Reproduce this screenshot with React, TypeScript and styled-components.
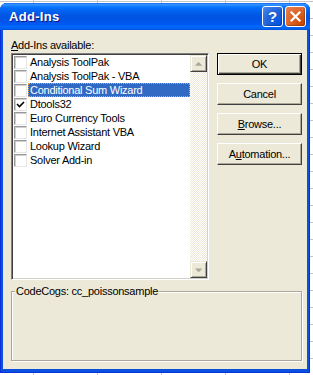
import React from 'react';
import styled, { createGlobalStyle } from 'styled-components';

const GlobalStyle = createGlobalStyle`
  html, body {
    margin: 0;
    padding: 0;
  }
  body {
    width: 313px;
    height: 375px;
    overflow: hidden;
    background-color: #fff;
    background-image:
      linear-gradient(#c4c4c4 1px, transparent 1px),
      linear-gradient(90deg, #c4c4c4 1px, transparent 1px);
    background-size: 64px 17px;
    background-position: 33px 1px;
    font-family: "Liberation Sans", Arial, sans-serif;
    font-size: 11px;
    letter-spacing: -0.25px;
  }
`;

const Window = styled.div`
  margin-top: 3px;
  width: 310px;
  height: 370px;
  display: flex;
  flex-direction: column;
  background: #0a52dd;
  border-radius: 7px 7px 0 0;
  box-shadow: inset 0 0 0 1px #0831d9;
  overflow: hidden;
`;

const TitleBar = styled.div`
  height: 27px;
  flex-shrink: 0;
  display: flex;
  align-items: center;
  padding: 0 4px 0 9px;
  background: linear-gradient(
    180deg,
    #0058ee 0%,
    #3a93ff 4%,
    #288eff 8%,
    #127dff 12%,
    #036ffc 18%,
    #0262ee 30%,
    #0057e5 44%,
    #0054e3 56%,
    #0055eb 70%,
    #005bf5 80%,
    #026afe 88%,
    #0062ef 94%,
    #0052d6 100%
  );
`;

const Title = styled.span`
  flex: 1;
  color: #fff;
  font-weight: bold;
  font-size: 13px;
  letter-spacing: 0.3px;
  text-shadow: 1px 1px #0f1089;
  margin-top: -1px;
`;

const TitleButton = styled.div<{ $kind: 'help' | 'close' }>`
  width: 19px;
  height: 19px;
  margin-left: 2px;
  border: 1px solid #fff;
  border-radius: 3px;
  display: flex;
  align-items: center;
  justify-content: center;
  color: #fff;
  font-weight: bold;
  font-size: 15px;
  letter-spacing: 0;
  background: ${(p) =>
    p.$kind === 'close'
      ? 'radial-gradient(circle at 90% 90%, #cc4600 0%, #dc6527 55%, #e8815a 100%)'
      : 'radial-gradient(circle at 90% 90%, #0054e9 0%, #2263d5 55%, #4b8bf4 100%)'};
  box-shadow: inset -1px -1px 1px rgba(0, 0, 0, 0.25);
`;

const Body = styled.div`
  flex: 1;
  margin: 0 3px 4px 3px;
  background: #ece9d8;
  padding: 9px 5px 0 8px;
  display: flex;
  flex-direction: column;
  color: #000;
`;

const TopRow = styled.div`
  display: flex;
  gap: 8px;
`;

const LeftCol = styled.div`
  display: flex;
  flex-direction: column;
`;

const Label = styled.div`
  height: 13px;
  line-height: 13px;
  margin-bottom: 1px;
`;

const Key = styled.span`
  text-decoration: underline;
  text-underline-offset: 1px;
`;

const ListBox = styled.div`
  width: 198px;
  height: 227px;
  box-sizing: border-box;
  border: 1px solid;
  border-color: #808080 #fff #fff #808080;
  box-shadow: inset 1px 1px 0 #404040, inset -1px -1px 0 #d4d0c8;
  padding: 1px;
  background: #fff;
  display: flex;
`;

const Items = styled.div`
  flex: 1;
  display: flex;
  flex-direction: column;
`;

const Row = styled.div`
  height: 14px;
  display: flex;
  align-items: center;
`;

const Check = styled.div`
  width: 13px;
  height: 13px;
  box-sizing: border-box;
  margin: 0 1px 0 1px;
  border: 1px solid;
  border-color: #999 #e6e6e6 #e6e6e6 #999;
  box-shadow: inset 1px 1px 0 #cfcfcf;
  display: flex;
  align-items: center;
  justify-content: center;
`;

const ItemText = styled.div<{ $selected?: boolean }>`
  flex: 1;
  height: 14px;
  line-height: 14px;
  padding-left: 2px;
  box-sizing: border-box;
  white-space: nowrap;
  background: ${(p) => (p.$selected ? '#316ac5' : 'transparent')};
  color: ${(p) => (p.$selected ? '#fff' : '#000')};
  outline: ${(p) => (p.$selected ? '1px dotted #f0a43c' : 'none')};
  outline-offset: -1px;
`;

const ScrollBar = styled.div`
  width: 17px;
  display: flex;
  flex-direction: column;
`;

const ScrollButton = styled.div`
  width: 17px;
  height: 17px;
  box-sizing: border-box;
  background: #ece9d8;
  border: 1px solid;
  border-color: #ece9d8 #404040 #404040 #ece9d8;
  box-shadow: inset 1px 1px 0 #fff, inset -1px -1px 0 #aca899;
  display: flex;
  align-items: center;
  justify-content: center;
`;

const Track = styled.div`
  flex: 1;
  background-color: #fff;
  background-image: conic-gradient(#ece9d8 25%, #fff 0 50%, #ece9d8 0 75%, #fff 0);
  background-size: 2px 2px;
`;

const RightCol = styled.div`
  padding-top: 14px;
  display: flex;
  flex-direction: column;
  gap: 8px;
`;

const Button = styled.div<{ $default?: boolean }>`
  width: 85px;
  height: 22px;
  box-sizing: border-box;
  background: #ece9d8;
  border: 1px solid;
  border-color: ${(p) => (p.$default ? '#000' : '#fff #404040 #404040 #fff')};
  box-shadow: ${(p) =>
    p.$default
      ? 'inset 1px 1px 0 #fff, inset -1px -1px 0 #404040, inset -2px -2px 0 #aca899'
      : 'inset -1px -1px 0 #aca899'};
  display: flex;
  align-items: center;
  justify-content: center;
  line-height: 13px;
`;

const GroupBox = styled.div`
  margin-top: 11px;
  width: 291px;
  height: 70px;
  box-sizing: border-box;
  border: 1px solid #aca899;
  box-shadow: 1px 1px 0 #fff, inset 1px 1px 0 #fff;
  display: flex;
  align-items: flex-start;
`;

const Caption = styled.span`
  margin: -7px 0 0 3px;
  padding: 0 1px;
  line-height: 13px;
  background: #ece9d8;
`;

const addIns = [
  { name: 'Analysis ToolPak', checked: false },
  { name: 'Analysis ToolPak - VBA', checked: false },
  { name: 'Conditional Sum Wizard', checked: false, selected: true },
  { name: 'Dtools32', checked: true },
  { name: 'Euro Currency Tools', checked: false },
  { name: 'Internet Assistant VBA', checked: false },
  { name: 'Lookup Wizard', checked: false },
  { name: 'Solver Add-in', checked: false },
];

function Arrow({ down }: { down?: boolean }) {
  return (
    <svg width="9" height="6" viewBox="0 0 9 6">
      <path
        d={down ? 'M1 1.5h7L4.5 5z' : 'M1 4.5h7L4.5 1z'}
        fill="#aca899"
        transform="translate(0.5 0.5)"
        opacity="0.5"
      />
      <path d={down ? 'M1 1.5h7L4.5 5z' : 'M1 4.5h7L4.5 1z'} fill="#aca899" />
    </svg>
  );
}

export default function App() {
  return (
    <>
      <GlobalStyle />
      <Window>
        <TitleBar>
          <Title>Add-Ins</Title>
          <TitleButton $kind="help">?</TitleButton>
          <TitleButton $kind="close">
            <svg width="11" height="11" viewBox="0 0 11 11">
              <path d="M1.5 1.5l8 8M9.5 1.5l-8 8" stroke="#fff" strokeWidth="2.2" strokeLinecap="square" />
            </svg>
          </TitleButton>
        </TitleBar>
        <Body>
          <TopRow>
            <LeftCol>
              <Label>
                <Key>A</Key>dd-Ins available:
              </Label>
              <ListBox>
                <Items>
                  {addIns.map((item) => (
                    <Row key={item.name}>
                      <Check>
                        {item.checked && (
                          <svg width="9" height="9" viewBox="0 0 9 9">
                            <path d="M1 4l2.5 2.5L8 2" stroke="#000" strokeWidth="1.6" fill="none" />
                          </svg>
                        )}
                      </Check>
                      <ItemText $selected={item.selected}>{item.name}</ItemText>
                    </Row>
                  ))}
                </Items>
                <ScrollBar>
                  <ScrollButton>
                    <Arrow />
                  </ScrollButton>
                  <Track />
                  <ScrollButton>
                    <Arrow down />
                  </ScrollButton>
                </ScrollBar>
              </ListBox>
            </LeftCol>
            <RightCol>
              <Button $default>OK</Button>
              <Button>Cancel</Button>
              <Button>
                <span>
                  <Key>B</Key>rowse...
                </span>
              </Button>
              <Button>
                <span>
                  A<Key>u</Key>tomation...
                </span>
              </Button>
            </RightCol>
          </TopRow>
          <GroupBox>
            <Caption>CodeCogs: cc_poissonsample</Caption>
          </GroupBox>
        </Body>
      </Window>
    </>
  );
}
